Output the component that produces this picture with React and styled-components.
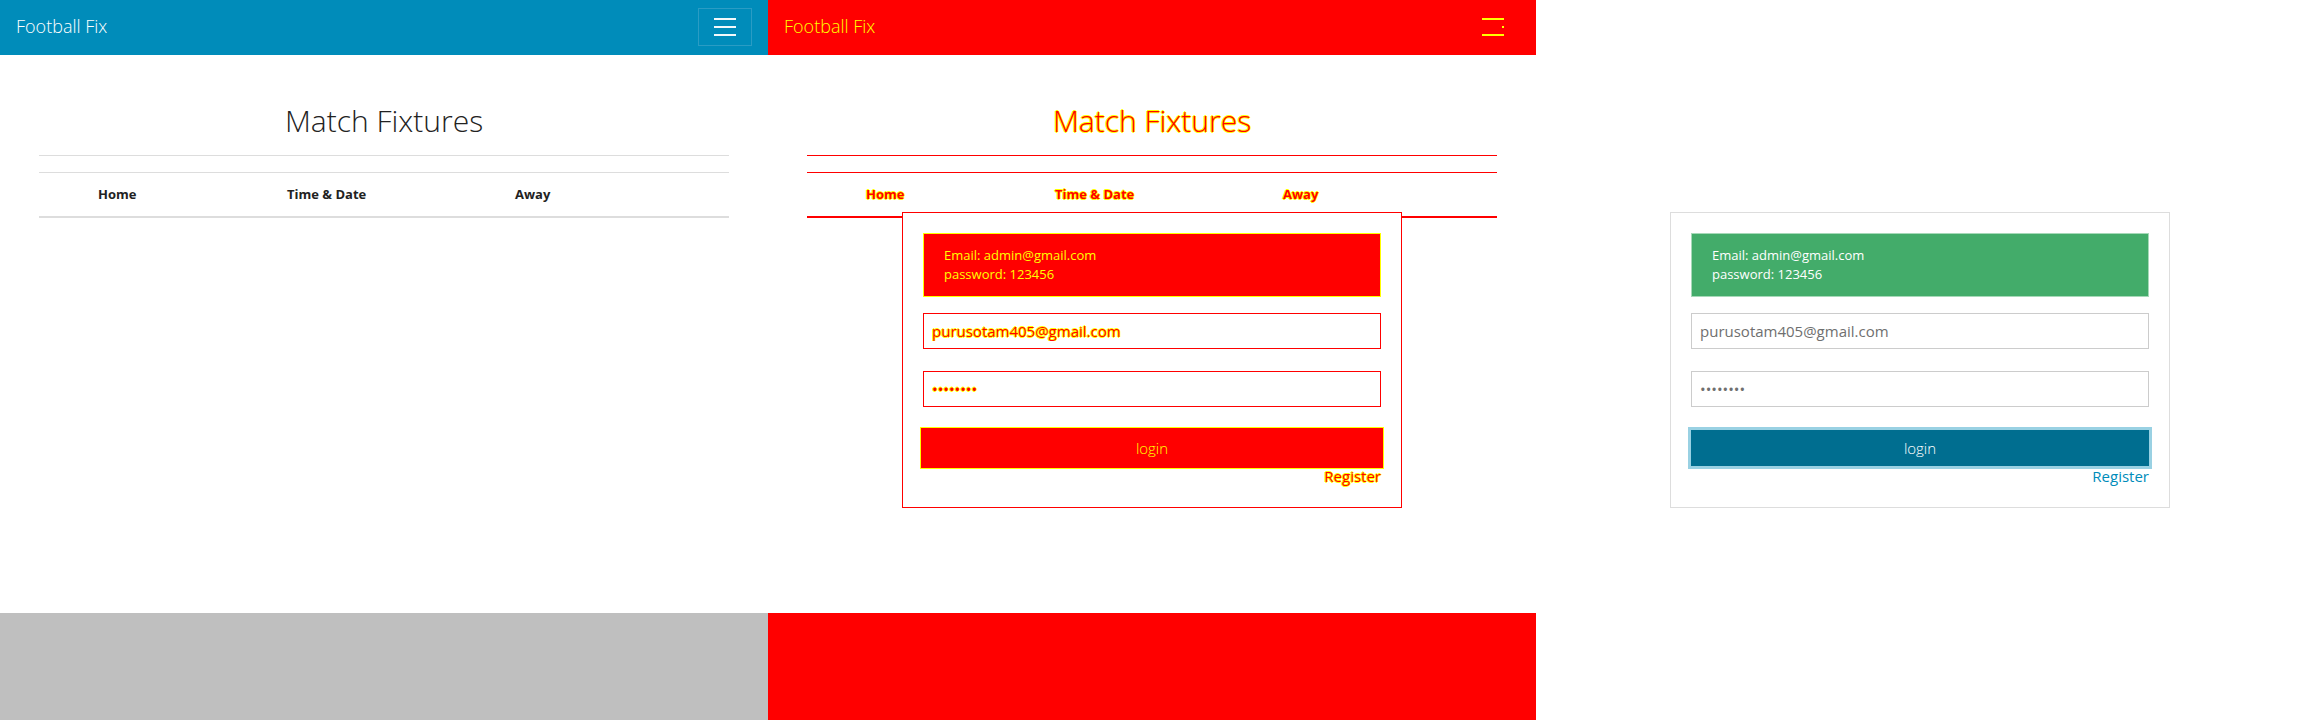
import React from 'react';
import styled, { createGlobalStyle, css } from 'styled-components';

const RED = '#ff0000';
const YEL = '#ffff00';

const Global = createGlobalStyle`
  html, body { margin: 0; padding: 0; background: #fff; }
  body { font-family: "Open Sans", "Liberation Sans", sans-serif; color: #222; }
  * { box-sizing: border-box; }
`;

const halo = css`
  color: ${RED};
  text-shadow: 1px 0 0 ${YEL}, -1px 0 0 ${YEL}, 0 1px 0 ${YEL}, 0 -1px 0 ${YEL};
`;

const Board = styled.div`
  display: grid;
  grid-template-columns: repeat(3, 768px);
  width: 2304px;
  height: 720px;
  overflow: hidden;
`;

const Panel = styled.section`
  display: flex;
  flex-direction: column;
  height: 720px;
  background: #fff;
  overflow: hidden;
`;

const Stack = styled.div`
  display: grid;
  height: 613px;
  & > * { grid-area: 1 / 1; }
`;

const Filler = styled.div`
  flex: 1;
  background: ${(p) => (p.$diff ? RED : '#bfbfbf')};
`;

const Page = styled.div`
  display: flex;
  flex-direction: column;
  height: 613px;
`;

const Navbar = styled.header`
  display: flex;
  justify-content: space-between;
  align-items: flex-start;
  height: 55px;
  flex: none;
  background: ${(p) => (p.$diff ? RED : '#008cba')};
`;

const Brand = styled.a`
  padding: 16px 15px 16px 16px;
  font-size: 18px;
  line-height: 20px;
  font-weight: 300;
  color: ${(p) => (p.$diff ? YEL : '#fff')};
  text-decoration: none;
`;

const Toggle = styled.button`
  display: flex;
  flex-direction: column;
  gap: 6px;
  width: 54px;
  height: 38px;
  margin: 8px 16px 0 0;
  padding: 9px 15px;
  background: transparent;
  border: 1px solid ${(p) => (p.$diff ? RED : '#2a9cc4')};
`;

const Bar = styled.span`
  display: block;
  height: 2px;
  width: 22px;
  background: ${(p) => (p.$diff ? YEL : '#f2f9fb')};
  ${(p) =>
    p.$dot &&
    css`
      width: 2px;
      align-self: flex-end;
    `}
`;

const Main = styled.main`
  display: flex;
  flex-direction: column;
  padding: 0 39px;
`;

const Title = styled.h2`
  margin: 49px 0 0;
  font-size: 30px;
  line-height: 33px;
  font-weight: 300;
  text-align: center;
  color: #222;
  ${(p) => p.$diff && halo}
`;

const Rule = styled.hr`
  margin: 18px 0 0;
  height: 1px;
  border: 0;
  background: ${(p) => (p.$diff ? RED : '#dddddd')};
`;

const Table = styled.div`
  margin-top: 16px;
  border-top: 1px solid ${(p) => (p.$diff ? RED : '#dddddd')};
  border-bottom: 2px solid ${(p) => (p.$diff ? RED : '#dddddd')};
`;

const HeadRow = styled.div`
  display: grid;
  grid-template-columns: 189px 228px 1fr;
  padding: 12px 0 12px 59px;
  font-size: 13px;
  line-height: 19px;
  font-weight: 700;
  color: #222;
  ${(p) => p.$diff && halo}
`;

const CardLayer = styled.div`
  display: flex;
  justify-content: center;
  align-items: flex-start;
  padding-top: 212px;
`;

const Card = styled.form`
  display: flex;
  flex-direction: column;
  width: 500px;
  padding: 20px;
  background: #fff;
  border: 1px solid ${(p) => (p.$diff ? RED : '#dddddd')};
`;

const Alert = styled.div`
  padding: 12px 20px;
  font-size: 13px;
  line-height: 19px;
  color: ${(p) => (p.$diff ? YEL : '#fff')};
  background: ${(p) => (p.$diff ? RED : '#43ac6a')};
  border: 1px solid ${(p) => (p.$diff ? YEL : '#a6d9b8')};
`;

const Input = styled.input`
  display: block;
  width: 100%;
  height: 36px;
  margin-top: ${(p) => p.$gap}px;
  padding: 0 8px;
  font-family: inherit;
  font-size: 15px;
  color: #6f6f6f;
  background: #fff;
  border: 1px solid ${(p) => (p.$diff ? RED : '#cccccc')};
  border-radius: 0;
  outline: none;
  ${(p) => p.$diff && halo}
`;

const LoginButton = styled.button`
  height: 36px;
  margin-top: 23px;
  font-family: inherit;
  font-size: 15px;
  font-weight: 300;
  color: ${(p) => (p.$diff ? YEL : '#fff')};
  background: ${(p) => (p.$diff ? RED : '#006e90')};
  border: 0;
  border-radius: 0;
  box-shadow: ${(p) =>
    p.$diff ? `0 0 0 2px ${RED}, 0 0 0 3px ${YEL}` : '0 0 0 3px #99d1e3'};
`;

const RegisterRow = styled.div`
  text-align: right;
  font-size: 15px;
  line-height: 21.4px;
`;

const RegisterLink = styled.a`
  color: #008cba;
  font-weight: 400;
  text-decoration: none;
  ${(p) => p.$diff && halo}
`;

function Header({ diff }) {
  return (
    <Navbar $diff={diff}>
      <Brand $diff={diff}>Football Fix</Brand>
      <Toggle $diff={diff} type="button" aria-label="menu">
        <Bar $diff={diff} />
        {diff ? <Bar $diff $dot /> : <Bar />}
        <Bar $diff={diff} />
      </Toggle>
    </Navbar>
  );
}

function Fixtures({ diff }) {
  return (
    <Main>
      <Title $diff={diff}>Match Fixtures</Title>
      <Rule $diff={diff} />
      <Table $diff={diff}>
        <HeadRow $diff={diff}>
          <span>Home</span>
          <span>Time &amp; Date</span>
          <span>Away</span>
        </HeadRow>
      </Table>
    </Main>
  );
}

function LoginCard({ diff }) {
  return (
    <CardLayer>
      <Card $diff={diff} onSubmit={(e) => e.preventDefault()}>
        <Alert $diff={diff}>
          Email: admin@gmail.com
          <br />
          password: 123456
        </Alert>
        <Input $diff={diff} $gap={16} type="email" defaultValue="purusotam405@gmail.com" />
        <Input $diff={diff} $gap={22} type="password" defaultValue="12345678" />
        <LoginButton $diff={diff} type="submit">login</LoginButton>
        <RegisterRow>
          <RegisterLink $diff={diff}>Register</RegisterLink>
        </RegisterRow>
      </Card>
    </CardLayer>
  );
}

export default function App() {
  return (
    <>
      <Global />
      <Board>
        <Panel>
          <Page>
            <Header />
            <Fixtures />
          </Page>
          <Filler />
        </Panel>
        <Panel>
          <Stack>
            <Page>
              <Header diff />
              <Fixtures diff />
            </Page>
            <LoginCard diff />
          </Stack>
          <Filler $diff />
        </Panel>
        <Panel>
          <LoginCard />
        </Panel>
      </Board>
    </>
  );
}
